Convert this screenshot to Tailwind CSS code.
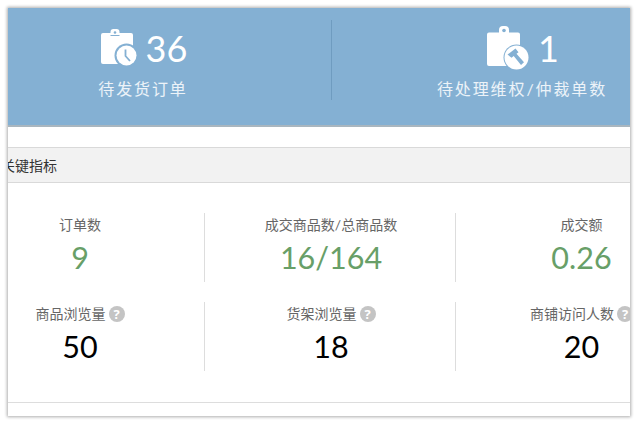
<!DOCTYPE html>
<html lang="zh-CN">
<head>
  <meta charset="UTF-8" />
  <title>店铺概况</title>
  <meta name="viewport" content="width=device-width, initial-scale=1" />
  <script src="https://cdn.jsdelivr.net/npm/@tailwindcss/browser@4"></script>
</head>
<body class="bg-white font-['Lato','Noto_Sans_CJK_SC',sans-serif] overflow-hidden">
  <div class="w-[640px] h-[423px] pt-[8px] pl-[8px]">
    <!-- window -->
    <div class="w-[622px] h-[408px] bg-white overflow-hidden shadow-[0_0_3px_1px_rgba(0,0,0,0.32)]">
      <div class="w-[760px] -ml-[55px]">

        <!-- Banner -->
        <div class="h-[119px] bg-[#84b0d3] border-b-2 border-[#a9b6bf] pt-[12px] flex text-white">
          <div class="w-[379px] h-[80px] border-r border-[#6f9cc0] flex flex-col items-center">
            <div class="flex items-center h-[56px] gap-[9px] pl-[4px]">
              <svg class="w-[36px] h-[38px]" viewBox="0 0 36 38">
                <path fill="#fff" d="M2 4h7.500V3a3 3 0 0 1 3-3h3a3 3 0 0 1 3 3v1H30a2 2 0 0 1 2 2v28a1 1 0 0 1-1 1H2a2 2 0 0 1-2-2V6a2 2 0 0 1 2-2z"/>
                <circle cx="14" cy="3.500" r="1.300" fill="#84b0d3"/>
                <path fill="none" stroke="#84b0d3" stroke-width="1" d="M9.500 6.500h9"/>
                <circle cx="25.500" cy="26.500" r="12" fill="#84b0d3"/>
                <circle cx="25.500" cy="26.500" r="10" fill="#fff"/>
                <path fill="none" stroke="#84b0d3" stroke-width="1.800" d="M24.500 20.500v6.500l4.500 5"/>
              </svg>
              <span class="text-[36px] leading-none">36</span>
            </div>
            <div class="text-[16px] leading-[22px] tracking-[1.9px] text-white/85 mt-[2px] pl-[2px]">待发货订单</div>
          </div>
          <div class="w-[378px] flex flex-col items-center">
            <div class="flex items-center h-[56px] gap-[9px] pl-[4px]">
              <svg class="w-[42px] h-[44px]" viewBox="0 0 42 44">
                <path fill="#fff" d="M2 6.500h10V4a4 4 0 0 1 4-4h2a4 4 0 0 1 4 4v2.500h9a2 2 0 0 1 2 2V39a1 1 0 0 1-1 1H2a2 2 0 0 1-2-2V8.500a2 2 0 0 1 2-2z"/>
                <circle cx="17" cy="4.500" r="1.800" fill="#84b0d3"/>
                <circle cx="29.500" cy="31.500" r="13" fill="#84b0d3"/>
                <circle cx="29.500" cy="31.500" r="12" fill="#fff"/>
                <path fill="#84b0d3" d="M20.500 28.500l8-6 3 3.800-2 1.500 7.500 8.500-3 2.700-7.300-8.900-2.200 1.700z"/>
              </svg>
              <span class="text-[36px] leading-none">1</span>
            </div>
            <div class="text-[16px] leading-[22px] tracking-[1.9px] text-white/85 mt-[2px] pl-[2px]">待处理维权/仲裁单数</div>
          </div>
        </div>

        <!-- Section title -->
        <div class="mt-[20px] h-[36px] bg-[#f2f2f2] border-y border-[#d9d9d9] flex items-center pl-[48px] text-[14px] text-[#333]">关键指标</div>

        <!-- Metrics -->
        <div class="pt-[30px] h-[220px] border-b border-[#dddddd] flex flex-col gap-[20px]">
          <div class="flex h-[69px]">
            <div class="w-[252px] pl-[3px] border-r border-[#dddddd] flex flex-col items-center">
              <div class="text-[14px] leading-[24px] text-[#666]">订单数</div>
              <div class="text-[30.5px] leading-[41px] text-[#689f68]">9</div>
            </div>
            <div class="w-[251px] pl-[2px] border-r border-[#dddddd] flex flex-col items-center">
              <div class="text-[14px] leading-[24px] text-[#666]">成交商品数/总商品数</div>
              <div class="text-[30.5px] leading-[41px] text-[#689f68]">16/164</div>
            </div>
            <div class="w-[251px] flex flex-col items-center">
              <div class="text-[14px] leading-[24px] text-[#666]">成交额</div>
              <div class="text-[30.5px] leading-[41px] text-[#689f68]">0.26</div>
            </div>
          </div>
          <div class="flex h-[69px]">
            <div class="w-[252px] pl-[3px] border-r border-[#dddddd] flex flex-col items-center">
              <div class="flex items-center gap-[3px] text-[14px] leading-[24px] text-[#666]">商品浏览量
                <span class="w-[16px] h-[16px] rounded-full bg-[#c4c4c4] text-white font-['Open_Sans'] text-[13px] font-bold leading-[16px] text-center">?</span>
              </div>
              <div class="text-[30.5px] leading-[41px] text-black">50</div>
            </div>
            <div class="w-[251px] pl-[2px] border-r border-[#dddddd] flex flex-col items-center">
              <div class="flex items-center gap-[3px] text-[14px] leading-[24px] text-[#666]">货架浏览量
                <span class="w-[16px] h-[16px] rounded-full bg-[#c4c4c4] text-white font-['Open_Sans'] text-[13px] font-bold leading-[16px] text-center">?</span>
              </div>
              <div class="text-[30.5px] leading-[41px] text-black">18</div>
            </div>
            <div class="w-[251px] flex flex-col items-center">
              <div class="flex items-center gap-[3px] text-[14px] leading-[24px] text-[#666]">商铺访问人数
                <span class="w-[16px] h-[16px] rounded-full bg-[#c4c4c4] text-white font-['Open_Sans'] text-[13px] font-bold leading-[16px] text-center">?</span>
              </div>
              <div class="text-[30.5px] leading-[41px] text-black">20</div>
            </div>
          </div>
        </div>

      </div>
    </div>
  </div>
</body>
</html>
